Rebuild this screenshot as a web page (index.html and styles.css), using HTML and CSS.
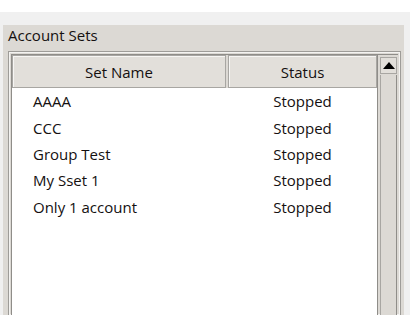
FILE: index.html
```html
<!DOCTYPE html>
<html lang="en">
<head>
  <title>Account Sets</title>
  <meta charset="utf-8">
  <link rel="stylesheet" href="styles.css">
</head>
<body>
  <div class="window">
    <div class="panel">
      <div class="panel-title">Account Sets</div>
      <div class="list-frame">
        <div class="list">
          <div class="list-header">
            <div class="col-name header-cell">Set Name</div>
            <div class="col-status header-cell">Status</div>
          </div>
          <div class="row"><span class="col-name">AAAA</span><span class="col-status">Stopped</span></div>
          <div class="row"><span class="col-name">CCC</span><span class="col-status">Stopped</span></div>
          <div class="row"><span class="col-name">Group Test</span><span class="col-status">Stopped</span></div>
          <div class="row"><span class="col-name">My Sset 1</span><span class="col-status">Stopped</span></div>
          <div class="row"><span class="col-name">Only 1 account</span><span class="col-status">Stopped</span></div>
        </div>
        <div class="scrollbar">
          <div class="scroll-up">
            <svg width="12" height="7" viewBox="0 0 12 7"><polygon points="0,7 12,7 6,0" fill="#000"/></svg>
          </div>
          <div class="scroll-track"></div>
        </div>
      </div>
    </div>
  </div>
</body>
</html>
```

FILE: styles.css
```css
*, *::before, *::after {
  margin: 0;
  box-sizing: border-box;
}

body {
  height: 315px;
  overflow: hidden;
  padding-top: 12px;
  background-color: #FFFFFF;
  color: #141010;
  font-family: "Open Sans", sans-serif;
  font-size: 15px;
}

.window {
  height: 303px;
  padding: 13px 6px 0 3px;
  background-color: #F0F0F0;
}

.panel {
  display: flex;
  flex-direction: column;
  height: 100%;
  padding: 0 3px 0 5px;
  background-color: #DCD9D4;
}

.panel-title {
  height: 26px;
  line-height: 21px;
}

.list-frame {
  display: flex;
  flex: 1;
  border: 1px solid #9E9C98;
  border-bottom: none;
  padding: 2px 2px 0;
  box-shadow: inset 0 0 0 1px #F4F3F1, inset 0 0 0 2px #DCD9D4;
}

.list {
  flex: 1;
  border-left: 1px solid #8F8D89;
  border-top: 1px solid #8F8D89;
  background-color: #FFFFFF;
}

.list-header {
  display: flex;
  height: 33px;
  background-color: #DCD9D4;
}

.header-cell {
  display: flex;
  align-items: center;
  justify-content: center;
  border: 1px solid #A8A6A2;
  background-color: #E2DFDA;
  box-shadow: inset 1px 1px 0 #F7F6F4;
}

.col-name {
  width: 214px;
}

.col-status {
  width: 149px;
  margin-left: 2px;
  text-align: center;
}

.row {
  display: flex;
  height: 26.4px;
  align-items: center;
}

.row .col-name {
  padding-left: 21px;
}

.scrollbar {
  display: flex;
  flex-direction: column;
  width: 22px;
  border-left: 1px solid #8F8D89;
  border-top: 1px solid #8F8D89;
  padding: 2px 1px 0 2px;
}

.scroll-up {
  display: flex;
  align-items: center;
  justify-content: center;
  height: 17px;
  border: 1px solid #A8A6A2;
  background-color: #E2DFDA;
}

.scroll-track {
  flex: 1;
  margin-top: 1px;
  border-left: 1px solid #A8A6A2;
  border-right: 1px solid #8F8D89;
  background-color: #DCD9D4;
}
```
